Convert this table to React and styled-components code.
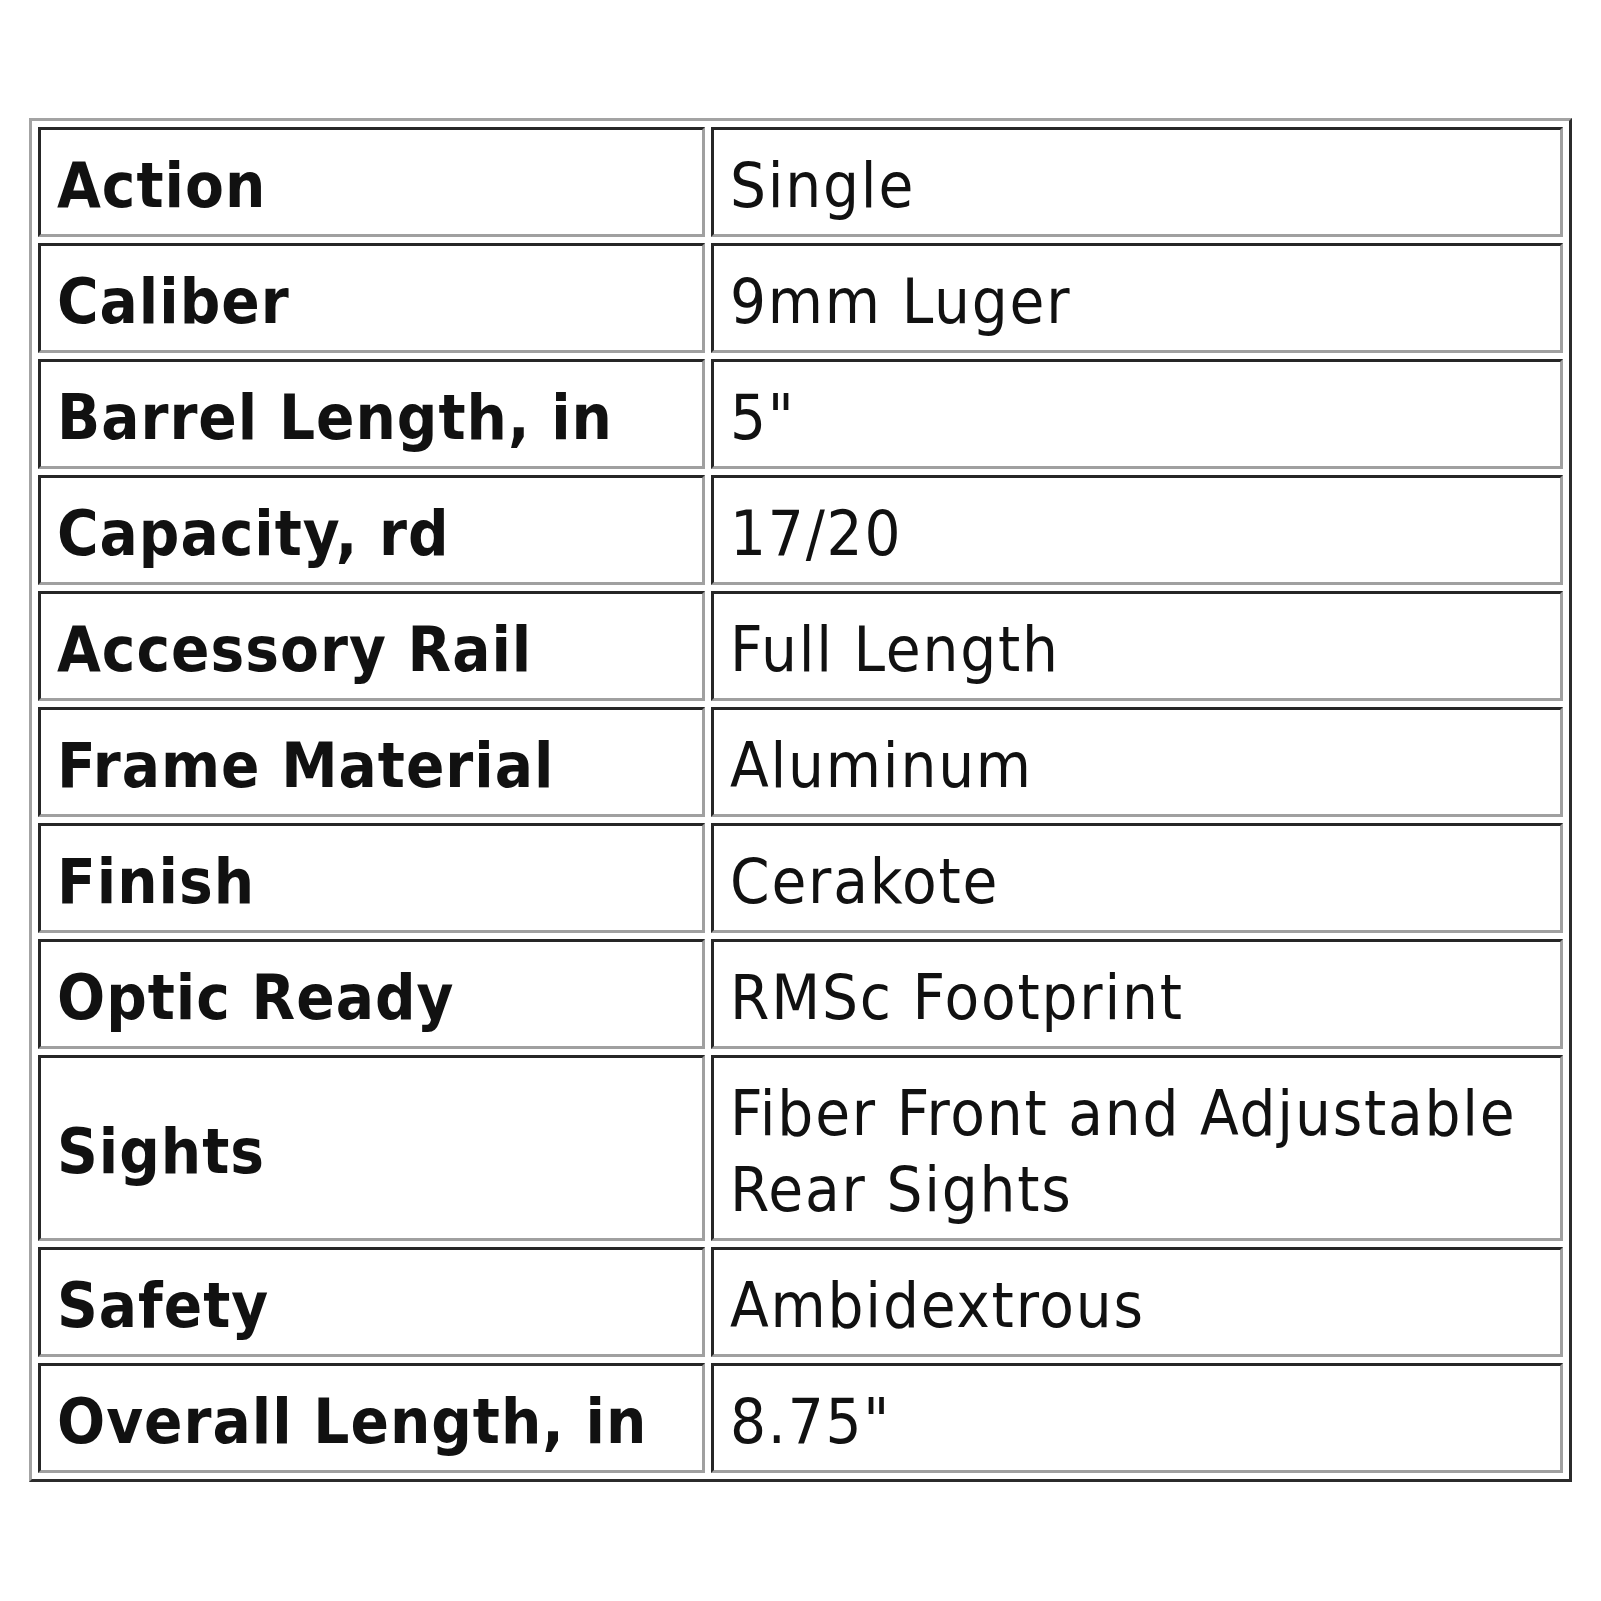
import React from "react";
import styled, { createGlobalStyle } from "styled-components";

const Global = createGlobalStyle`
  html, body { margin: 0; padding: 0; background: #ffffff; }
  body { font-family: "DejaVu Sans Condensed", "DejaVu Sans", Verdana, sans-serif; }
`;

const Page = styled.div`
  padding: 118px 0 0 29px;
  width: 1601px;
  height: 1601px;
  box-sizing: border-box;
`;

const SpecTable = styled.table`
  width: 1543px;
  border-collapse: separate;
  border-spacing: 6px;
  border-style: solid;
  border-width: 3px;
  border-color: #a3a3a3 #2b2b2b #2b2b2b #a3a3a3;
  table-layout: fixed;
`;

const Cell = styled.td`
  border-style: solid;
  border-width: 3px;
  border-color: #262626 #a0a0a0 #a0a0a0 #262626;
  padding: 18px 16px 10px 16px;
  font-family: "DejaVu Sans Condensed", "DejaVu Sans", Verdana, sans-serif;
  font-size: 63px;
  line-height: 76px;
  letter-spacing: ${(p) => (p.$label ? "1px" : "1.8px")};
  color: #111111;
  vertical-align: middle;
  font-weight: ${(p) => (p.$label ? 700 : 400)};
  width: ${(p) => (p.$label ? "629px" : "auto")};
`;

const rows = [
  ["Action", "Single"],
  ["Caliber", "9mm Luger"],
  ["Barrel Length, in", '5"'],
  ["Capacity, rd", "17/20"],
  ["Accessory Rail", "Full Length"],
  ["Frame Material", "Aluminum"],
  ["Finish", "Cerakote"],
  ["Optic Ready", "RMSc Footprint"],
  ["Sights", "Fiber Front and Adjustable Rear Sights"],
  ["Safety", "Ambidextrous"],
  ["Overall Length, in", '8.75"'],
];

export default function App() {
  return (
    <Page>
      <Global />
      <SpecTable>
        <tbody>
          {rows.map(([k, v]) => (
            <tr key={k}>
              <Cell $label>{k}</Cell>
              <Cell>{v}</Cell>
            </tr>
          ))}
        </tbody>
      </SpecTable>
    </Page>
  );
}
